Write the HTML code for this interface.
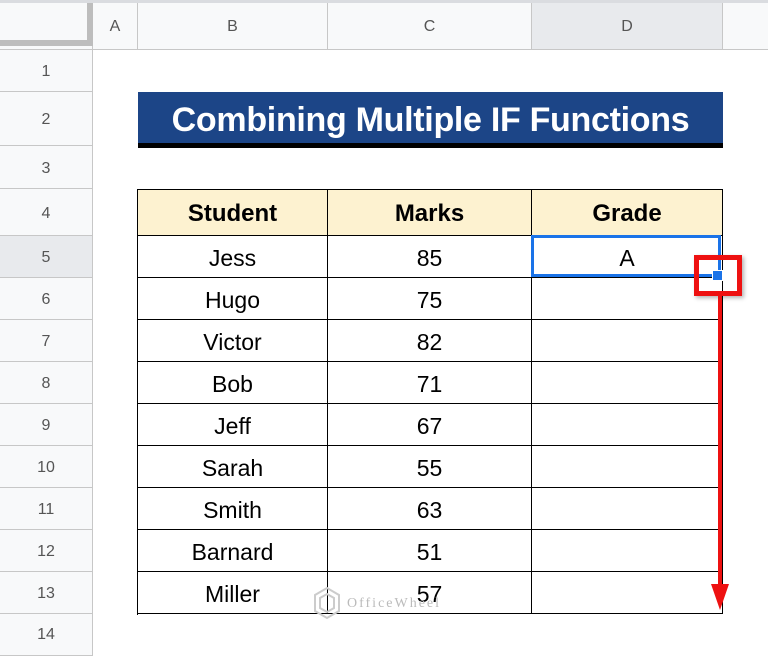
<!DOCTYPE html>
<html><head><style>
body{margin:0;width:768px;height:645px;overflow:hidden;background:#fff;font-family:"Liberation Sans",Arial,sans-serif;position:relative}
.a{position:absolute;box-sizing:border-box}
.ch{top:3px;height:47px;background:#f8f9fa;border-right:1px solid #c7c7c7;border-bottom:1px solid #c7c7c7;color:#555;font-size:16px;text-align:center;line-height:47px}
.rh{left:0;width:93px;background:#f8f9fa;border-right:1px solid #c7c7c7;border-bottom:1px solid #c7c7c7;color:#555;font-size:16px;text-align:center}
.c{font-size:23px;color:#000;text-align:center;border-right:1.5px solid #000;border-bottom:1.5px solid #000}
</style></head><body>
<div class="a" style="left:0;top:0;width:768px;height:3px;background:#dadce0"></div>
<div class="a" style="left:0;top:3px;width:93px;height:47px;background:#f8f9fa;border-bottom:1px solid #c7c7c7;border-right:1px solid #c7c7c7"></div>
<div class="a" style="left:0;top:40px;width:93px;height:6px;background:#bdbdbd"></div>
<div class="a" style="left:87px;top:3px;width:6px;height:43px;background:#bdbdbd"></div>
<div class="a ch" style="left:93px;width:45px">A</div>
<div class="a ch" style="left:138px;width:190px">B</div>
<div class="a ch" style="left:328px;width:204px">C</div>
<div class="a ch" style="left:532px;width:191px;background:#e8eaed">D</div>
<div class="a ch" style="left:723px;width:50px"></div>

<div class="a rh" style="top:50px;height:42px;line-height:44px">1</div>
<div class="a rh" style="top:92px;height:54px;line-height:56px">2</div>
<div class="a rh" style="top:146px;height:43px;line-height:45px">3</div>
<div class="a rh" style="top:189px;height:47px;line-height:49px">4</div>
<div class="a rh" style="top:236px;height:42px;line-height:44px;background:#e8eaed">5</div>
<div class="a rh" style="top:278px;height:42px;line-height:44px">6</div>
<div class="a rh" style="top:320px;height:42px;line-height:44px">7</div>
<div class="a rh" style="top:362px;height:42px;line-height:44px">8</div>
<div class="a rh" style="top:404px;height:42px;line-height:44px">9</div>
<div class="a rh" style="top:446px;height:42px;line-height:44px">10</div>
<div class="a rh" style="top:488px;height:42px;line-height:44px">11</div>
<div class="a rh" style="top:530px;height:42px;line-height:44px">12</div>
<div class="a rh" style="top:572px;height:42px;line-height:44px">13</div>
<div class="a rh" style="top:614px;height:42px;line-height:42px">14</div>

<div class="a" style="left:138px;top:92px;width:585px;height:56px;background:#1c4587;border-bottom:5px solid #000;color:#fff;font-weight:bold;font-size:34px;text-align:center;line-height:56px;letter-spacing:-0.3px">Combining Multiple IF Functions</div>

<div class="a" style="left:137px;top:189px;width:586px;height:426px;border-left:1.5px solid #000;border-top:1.5px solid #000"></div>
<div id="t"></div>
<script>
var rows=[["Student","Marks","Grade"],["Jess","85","A"],["Hugo","75",""],["Victor","82",""],["Bob","71",""],["Jeff","67",""],["Sarah","55",""],["Smith","63",""],["Barnard","51",""],["Miller","57",""]];
var xs=[138,328,532,723],h="";
rows.forEach(function(r,i){var top=i==0?190:236+(i-1)*42,ht=i==0?46:42;
for(var j=0;j<3;j++){h+='<div class="a c" style="left:'+xs[j]+'px;top:'+top+'px;width:'+(xs[j+1]-xs[j])+'px;height:'+ht+'px;line-height:'+(ht+2)+'px;'+(i==0?'background:#fdf2d0;font-weight:bold;font-size:24px;':'')+'">'+r[j]+'</div>';}});
document.getElementById('t').outerHTML=h;
</script>
<div class="a" style="left:531px;top:235px;width:190px;height:42px;border:3px solid #1a73e8"></div>
<div class="a" style="left:694px;top:255px;width:48px;height:41px;border:5px solid #ee1111;box-shadow:2px 2px 4px rgba(0,0,0,.3)"></div>
<div class="a" style="left:712px;top:270px;width:11px;height:11px;background:#1a73e8;border:1px solid #fff"></div>
<div class="a" style="left:718px;top:296px;width:4px;height:290px;background:#ee1111"></div>
<div class="a" style="left:711px;top:584px;width:0;height:0;border-left:9px solid transparent;border-right:9px solid transparent;border-top:26px solid #ee1111"></div>
<svg class="a" style="left:312px;top:586px" width="30" height="34" viewBox="0 0 30 34"><path d="M15 2 L27 9 L27 25 L15 32 L3 25 L3 9 Z M15 8 L22 12 L22 22 L15 26 L8 22 L8 12 Z" fill="none" stroke="#ccc" stroke-width="2"/></svg>
<div class="a" style="left:347px;top:596px;color:#bbb;font-size:14px;letter-spacing:2px;font-family:'Liberation Serif',serif">OfficeWheel</div>
</body></html>
